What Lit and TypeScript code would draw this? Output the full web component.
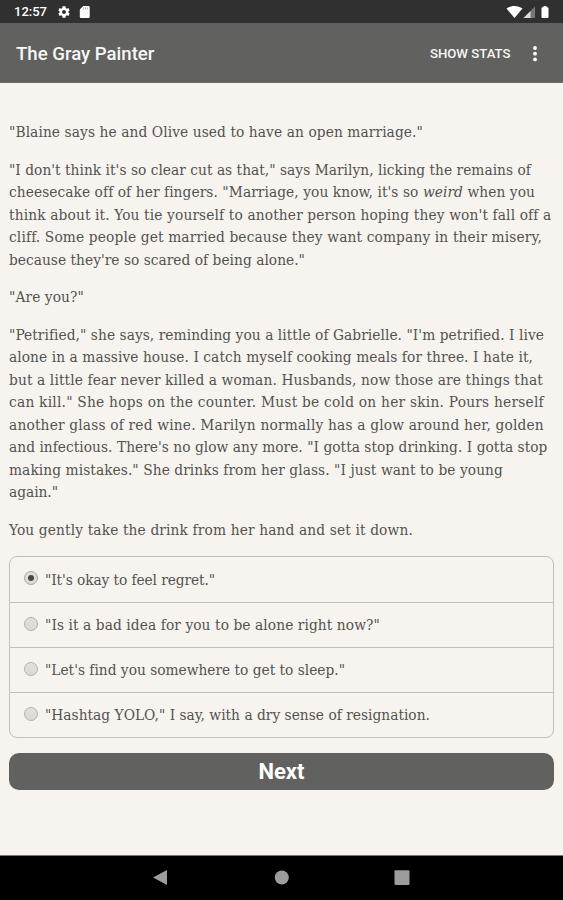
import { LitElement, html, css, svg } from "lit";
import { customElement, property, state } from "lit/decorators.js";

interface Line {
  text: string;
  width: number;
  em?: string;
  rest?: string;
}

const STORY: Line[][] = [
  [{ text: '"Blaine says he and Olive used to have an open marriage."', width: 414 }],
  [
    { text: '"I don\'t think it\'s so clear cut as that," says Marilyn, licking the remains of', width: 522 },
    { text: 'cheesecake off of her fingers. "Marriage, you know, it\'s so ', em: "weird", rest: " when you", width: 526 },
    { text: "think about it. You tie yourself to another person hoping they won't fall off a", width: 542.5 },
    { text: "cliff. Some people get married because they want company in their misery,", width: 533 },
    { text: "because they're so scared of being alone.\"", width: 296 },
  ],
  [{ text: '"Are you?"', width: 75 }],
  [
    { text: '"Petrified," she says, reminding you a little of Gabrielle. "I\'m petrified. I live', width: 535 },
    { text: "alone in a massive house. I catch myself cooking meals for three. I hate it,", width: 524 },
    { text: "but a little fear never killed a woman. Husbands, now those are things that", width: 534 },
    { text: 'can kill." She hops on the counter. Must be cold on her skin. Pours herself', width: 535 },
    { text: "another glass of red wine. Marilyn normally has a glow around her, golden", width: 535 },
    { text: 'and infectious. There\'s no glow any more. "I gotta stop drinking. I gotta stop', width: 538.5 },
    { text: 'making mistakes." She drinks from her glass. "I just want to be young', width: 494 },
    { text: 'again."', width: 49 },
  ],
  [{ text: "You gently take the drink from her hand and set it down.", width: 404 }],
];

const OPTIONS: Line[] = [
  { text: '"It\'s okay to feel regret."', width: 170 },
  { text: '"Is it a bad idea for you to be alone right now?"', width: 335 },
  { text: '"Let\'s find you somewhere to get to sleep."', width: 300 },
  { text: '"Hashtag YOLO," I say, with a dry sense of resignation.', width: 385 },
];

/** One line of copy, tracked so that it sets to the given measure. */
@customElement("set-line")
class SetLine extends LitElement {
  @property({ attribute: false }) line!: Line;

  static styles = css`
    :host { display: block; white-space: pre; }
    .text { display: inline-block; }
    em { font-style: italic; }
  `;

  firstUpdated() {
    const el = this.renderRoot.querySelector(".text") as HTMLElement;
    const count = el.textContent!.length;
    el.style.letterSpacing = "0.001px";
    const natural = el.getBoundingClientRect().width;
    el.style.letterSpacing = `${((this.line.width - natural) / count).toFixed(4)}px`;
  }

  render() {
    const l = this.line;
    return html`<span class="text">${l.text}${l.em ? html`<em>${l.em}</em>` : ""}${l.rest ?? ""}</span>`;
  }
}

@customElement("app-root")
class AppRoot extends LitElement {
  @state() private selected = 0;

  static styles = css`
    :host {
      display: flex;
      flex-direction: column;
      width: 100%;
      height: 900px;
      overflow: hidden;
      background: #f7f4ef;
      color: #535250;
      font-family: Roboto, sans-serif;
    }
    * { box-sizing: border-box; }
    svg { display: block; }
    .status {
      height: 23px;
      flex: none;
      display: flex;
      align-items: center;
      padding: 1px 12px 0 14px;
      background: #303030;
      color: #fff;
    }
    .clock { width: 43px; font-size: 13px; font-weight: 500; line-height: 22px; }
    .spacer { flex: 1; }
    .bar {
      height: 60px;
      flex: none;
      display: flex;
      align-items: center;
      padding: 2px 23px 0 16px;
      background: #616160;
      color: #f7f7f6;
      border-bottom: 1px solid #6c6c6a;
    }
    .title { flex: 1; font-size: 18.6px; font-weight: 500; line-height: 24px; }
    .stats { font-size: 13.2px; font-weight: 500; line-height: 20px; margin-right: 19.5px; }
    .page {
      flex: 1;
      padding: 38px 9px 0;
      font-family: "DejaVu Serif Condensed", "DejaVu Serif", serif;
      font-stretch: condensed;
      font-size: 15.3px;
      line-height: 22.5px;
    }
    .para { margin: 0 0 15px; }
    .options {
      margin-top: 15px;
      border: 1px solid #c2c0bd;
      border-radius: 8px;
      height: 182px;
      display: grid;
      grid-template-rows: repeat(4, 1fr);
    }
    .option { display: flex; align-items: center; padding: 1px 0 0 14px; }
    .option + .option { border-top: 1px solid #c2c0bd; }
    .radio {
      width: 14px;
      height: 14px;
      flex: none;
      margin: 0 7px 4px 0;
      display: grid;
      place-items: center;
      border: 1px solid #b3b2b0;
      border-radius: 50%;
      background: linear-gradient(#e2e1df, #dad9d8);
    }
    .radio.on { border-color: #a9a8a6; }
    .radio.on::after { content: ""; width: 6px; height: 6px; border-radius: 50%; background: #484848; }
    .next {
      display: block;
      width: 100%;
      height: 37px;
      margin-top: 15px;
      padding: 0;
      border: 0;
      border-radius: 10px;
      background: #616160;
      color: #fff;
      font: 700 22px/37px Roboto, sans-serif;
    }
    .nav {
      height: 45px;
      flex: none;
      display: grid;
      grid-template-columns: 168px 121px 1fr;
      border-top: 1px solid #777;
      background: #000;
    }
  `;

  render() {
    return html`
      <div class="status">
        <span class="clock">12:57</span>
        <svg width="14" height="14" viewBox="0 0 24 24" fill="#fff">
          <path d="M19.4 13a7.500 7.500 0 0 0 0-2l2.300-1.700-2.200-4-2.800 1.100a7.600 7.600 0 0 0-1.700-1L14.600 2H9.400L9 5.400a7.600 7.600 0 0 0-1.700 1L4.500 5.300l-2.200 4L4.600 11a7.500 7.500 0 0 0 0 2l-2.300 1.700 2.200 4 2.800-1.100a7.600 7.600 0 0 0 1.700 1l.4 3.400h5.200l.4-3.400a7.600 7.600 0 0 0 1.700-1l2.800 1.100 2.200-4zM12 15.400a3.400 3.400 0 1 1 0-6.800 3.400 3.400 0 0 1 0 6.800z" />
        </svg>
        <svg width="19" height="14" viewBox="0 0 19 14">
          <path fill="#fff" d="M12.200 1h5.300a1.200 1.200 0 0 1 1.200 1.200v9.600a1.200 1.200 0 0 1-1.200 1.200H10a1.200 1.200 0 0 1-1.200-1.200V4.400z" />
          <path stroke="#999" stroke-width=".8" d="M12.600 2.500v2M14.600 2.500v2M16.600 2.500v2" />
        </svg>
        <span class="spacer"></span>
        <svg width="45" height="14" viewBox="0 0 45 14">
          <path fill="#fff" d="M.5 3.500C5 .1 12 .1 16.500 3.500L8.500 13z" />
          <path fill="#777" d="M29 1.500V13H17.500z" />
          <path fill="#ddd" d="M24.500 6V13h-7z" />
          <path fill="#fff" d="M37.500 1h3v1.200h1a1 1 0 0 1 1 1V12a1 1 0 0 1-1 1h-5a1 1 0 0 1-1-1V3.200a1 1 0 0 1 1-1h1z" />
        </svg>
      </div>
      <div class="bar">
        <span class="title">The Gray Painter</span>
        <span class="stats">SHOW STATS</span>
        <svg width="10" height="18" viewBox="0 0 10 18" fill="#fff">
          <circle cx="5" cy="3" r="1.900" /><circle cx="5" cy="8.700" r="1.900" /><circle cx="5" cy="14.400" r="1.900" />
        </svg>
      </div>
      <div class="page">
        ${STORY.map((p) => html`<div class="para">${p.map((l) => html`<set-line .line=${l}></set-line>`)}</div>`)}
        <div class="options">
          ${OPTIONS.map(
            (o, i) => html`<div class="option" @click=${() => (this.selected = i)}>
              <span class="radio ${i === this.selected ? "on" : ""}"></span>
              <set-line .line=${o}></set-line>
            </div>`
          )}
        </div>
        <button class="next">Next</button>
      </div>
      <div class="nav">
        ${this.key(153, svg`<path d="M0 7.500L14 0V15z" />`)}
        ${this.key(106.5, svg`<circle cx="7.300" cy="7.500" r="7" />`)}
        ${this.key(105.5, svg`<rect x="0" y=".3" width="15" height="14.600" rx="1" />`)}
      </div>
    `;
  }

  private key(inset: number, shape: unknown) {
    return html`<svg width=${inset + 16} height="44" viewBox="${-inset} -14 ${inset + 16} 44" fill="#9c9c9c">${shape}</svg>`;
  }
}
